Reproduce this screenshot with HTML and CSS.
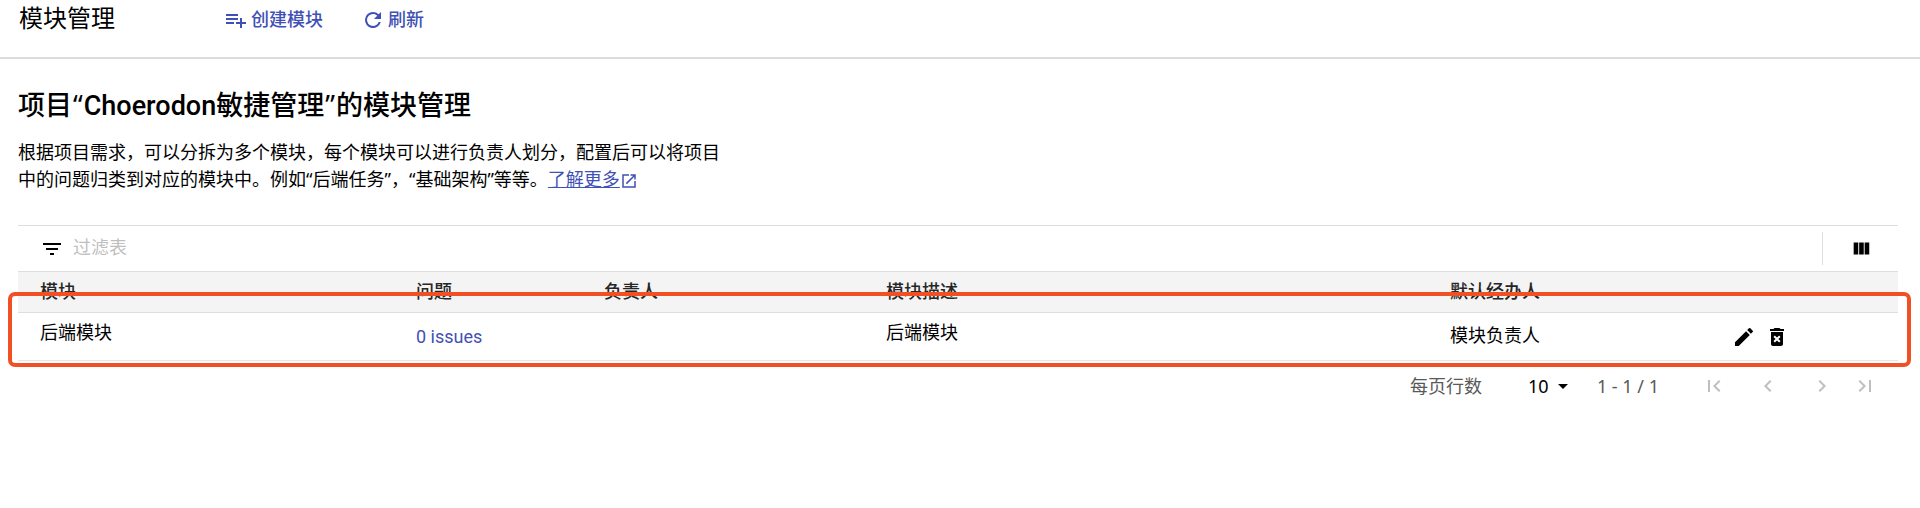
FILE: index.html
```html
<!DOCTYPE html>
<html lang="zh-CN">
<head>
<meta charset="utf-8">
<title>模块管理</title>
<link rel="stylesheet" href="styles.css">
</head>
<body>
<header class="page-header">
  <h1 class="page-title">模块管理</h1>
  <button class="action" type="button">
    <svg class="icon" viewBox="0 0 24 24" aria-hidden="true"><path d="M14 10H2v2h12v-2zm0-4H2v2h12V6zM2 16h8v-2H2v2zm16-2v-4h-2v4h-4v2h4v4h2v-4h4v-2h-4z"/></svg>
    <span>创建模块</span>
  </button>
  <button class="action" type="button">
    <svg class="icon" viewBox="0 0 24 24" aria-hidden="true"><path d="M17.65 6.35A7.96 7.96 0 0 0 12 4a8 8 0 1 0 7.73 10h-2.08A6 6 0 1 1 12 6c1.66 0 3.14.69 4.22 1.78L13 11h7V4l-2.35 2.35z"/></svg>
    <span>刷新</span>
  </button>
</header>
<main class="content">
  <h2 class="heading">项目<span class="quote">“</span>Choerodon敏捷管理<span class="quote">”</span>的模块管理</h2>
  <p class="intro">根据项目需求，可以分拆为多个模块，每个模块可以进行负责人划分，配置后可以将项目<br>中的问题归类到对应的模块中。例如“后端任务”，“基础架构”等等。<a class="more" href="#more">了解更多<svg class="more-icon" viewBox="0 0 24 24" aria-hidden="true"><path d="M19 19H5V5h7V3H3v18h18v-9h-2v7zM14 3v2h3.59l-9.83 9.83 1.41 1.41L19 6.41V10h2V3h-7z"/></svg></a></p>

  <div class="filter-bar">
    <svg class="icon filter-icon" viewBox="0 0 24 24" aria-hidden="true"><path d="M10 18h4v-2h-4v2zM3 6v2h18V6H3zm3 7h12v-2H6v2z"/></svg>
    <input class="filter-input" type="text" placeholder="过滤表" aria-label="过滤表">
    <button class="columns" type="button" aria-label="列">
      <svg class="icon" viewBox="0 0 24 24" aria-hidden="true"><path d="M10 18h5V5h-5v13zm-6 0h5V5H4v13zM16 5v13h5V5h-5z"/></svg>
    </button>
  </div>

  <div class="table-area">
    <table class="modules">
      <colgroup><col class="w20"><col class="w10"><col class="w15"><col class="w30"><col class="w15"><col class="w10"></colgroup>
      <thead>
        <tr><th>模块</th><th>问题</th><th>负责人</th><th>模块描述</th><th>默认经办人</th><td></td></tr>
      </thead>
      <tbody>
        <tr>
          <td class="name">后端模块</td>
          <td><a class="issues" href="#issues">0 issues</a></td>
          <td></td>
          <td class="name">后端模块</td>
          <td>模块负责人</td>
          <td>
            <div class="row-actions">
              <button type="button" aria-label="编辑"><svg class="icon" viewBox="0 0 24 24" aria-hidden="true"><path d="M3 17.25V21h3.75L17.81 9.94l-3.75-3.75L3 17.25zM20.71 7.04a1 1 0 0 0 0-1.41l-2.34-2.34a1 1 0 0 0-1.41 0l-1.83 1.83 3.75 3.75 1.83-1.83z"/></svg></button>
              <button type="button" aria-label="删除"><svg class="icon" viewBox="0 0 24 24" aria-hidden="true"><path fill-rule="evenodd" d="M6 19c0 1.1.9 2 2 2h8c1.1 0 2-.9 2-2V7H6v12zm2.46-7.12 1.41-1.41L12 12.59l2.12-2.12 1.41 1.41L13.41 14l2.12 2.12-1.41 1.41L12 15.41l-2.12 2.12-1.41-1.41L10.59 14l-2.13-2.12zM15.5 4l-1-1h-5l-1 1H5v2h14V4h-3.5z"/></svg></button>
            </div>
          </td>
        </tr>
      </tbody>
    </table>
    <div class="highlight"></div>
  </div>

  <nav class="pagination" aria-label="分页">
    <label for="page-size">每页行数</label>
    <div class="size">
      <select id="page-size"><option>10</option><option>20</option></select>
      <svg class="caret" viewBox="0 0 10 5" aria-hidden="true"><path d="M0 0h10L5 5z"/></svg>
    </div>
    <span class="range">1 - 1 / 1</span>
    <div class="pager">
      <button type="button" disabled aria-label="首页"><svg class="icon" viewBox="0 0 24 24"><path d="M18.41 16.59 13.82 12l4.59-4.59L17 6l-6 6 6 6zM6 6h2v12H6z"/></svg></button>
      <button type="button" disabled aria-label="上一页"><svg class="icon" viewBox="0 0 24 24"><path d="M15.41 7.41 14 6l-6 6 6 6 1.41-1.41L10.83 12z"/></svg></button>
      <button type="button" disabled aria-label="下一页"><svg class="icon" viewBox="0 0 24 24"><path d="M10 6 8.59 7.41 13.17 12l-4.58 4.59L10 18l6-6z"/></svg></button>
      <button class="last" type="button" disabled aria-label="末页"><svg class="icon" viewBox="0 0 24 24"><path d="M5.59 7.41 10.18 12l-4.59 4.59L7 18l6-6-6-6zM16 6h2v12h-2z"/></svg></button>
    </div>
  </nav>
</main>
</body>
</html>
```
FILE: styles.css
```css
* { box-sizing: border-box; }

body {
  margin: 0;
  background: #fff;
  color: #000;
  font: 18px/27px "Liberation Sans", "Noto Sans CJK SC", sans-serif;
}

button {
  display: flex;
  align-items: center;
  padding: 0;
  border: 0;
  background: none;
  color: inherit;
  font: inherit;
}

.icon {
  display: block;
  width: 24px;
  height: 24px;
  fill: currentColor;
}

.page-header {
  display: flex;
  align-items: flex-start;
  height: 59px;
  padding: 0 19px;
  border-bottom: 2px solid #dcdcdc;
}

.page-title {
  margin: 0 109px 0 0;
  font-size: 24px;
  font-weight: 400;
  line-height: 38px;
}

.action {
  gap: 3px;
  height: 40px;
  margin-right: 38px;
  color: #3f51b5;
  font-weight: 500;
}

.content { padding: 28px 22px 0 18px; }

.heading {
  margin: 0;
  font-family: Roboto, "Noto Sans CJK SC", sans-serif;
  font-size: 27px;
  font-weight: 500;
  line-height: 38px;
}

.quote {
  padding: 0 1px;
  font-family: "Noto Sans", sans-serif;
  font-weight: 400;
  line-height: 1;
}

.intro {
  margin: 14px 0 32px;
  font-family: "Noto Sans", "Noto Sans CJK SC", sans-serif;
}

.more { color: #3f51b5; }

.more-icon {
  width: 18px;
  height: 18px;
  vertical-align: -4px;
  fill: currentColor;
}

.filter-bar {
  display: flex;
  align-items: center;
  height: 46px;
  padding-left: 22px;
  border-top: 1px solid #dedede;
}

.filter-input {
  flex: 1;
  min-width: 0;
  margin-left: 9px;
  padding: 0;
  border: 0;
  outline: 0;
  font: inherit;
}

.filter-input::placeholder { color: #bfbfbf; }

.columns {
  justify-content: center;
  width: 76px;
  height: 33px;
  border-left: 1px solid #dedede;
}

.columns .icon { width: 22px; height: 22px; }

.table-area { position: relative; }

.modules {
  width: 100%;
  table-layout: fixed;
  border-collapse: collapse;
}

.w10 { width: 10%; }
.w15 { width: 15%; }
.w20 { width: 20%; }
.w30 { width: 30%; }

.modules th,
.modules td {
  padding: 0 0 0 22px;
  text-align: left;
}

.modules thead tr {
  height: 41px;
  border-top: 1px solid #dedede;
  border-bottom: 1px solid #dedede;
  background: #f4f4f4;
  color: #262626;
}

.modules th { font-weight: 500; }

.modules tbody tr {
  height: 48px;
  border-bottom: 1px solid #e3e6e8;
}

.modules .name { padding-bottom: 6px; }

.issues {
  color: #3f51b5;
  font-family: Roboto, sans-serif;
  text-decoration: none;
}

.row-actions {
  display: flex;
  gap: 9px;
}

.highlight {
  position: absolute;
  inset: 21px -13px -6px -10px;
  border: 4px solid #f15025;
  border-radius: 7px;
  pointer-events: none;
}

.pagination {
  display: flex;
  align-items: center;
  justify-content: flex-end;
  height: 50px;
  padding-right: 21px;
  color: #595959;
  font-family: "Noto Sans", "Noto Sans CJK SC", sans-serif;
}

.size {
  display: flex;
  align-items: center;
  margin: 0 29px 0 46px;
  color: #000;
}

.size select {
  width: 30px;
  padding: 0;
  border: 0;
  appearance: none;
  background: none;
  color: inherit;
  font: inherit;
}

.caret { width: 10px; height: 5px; }

.range { margin-right: 43px; }

.pager {
  display: flex;
  gap: 30px;
  color: #bfbfbf;
}

.pager .last { margin-left: -11px; }
```
